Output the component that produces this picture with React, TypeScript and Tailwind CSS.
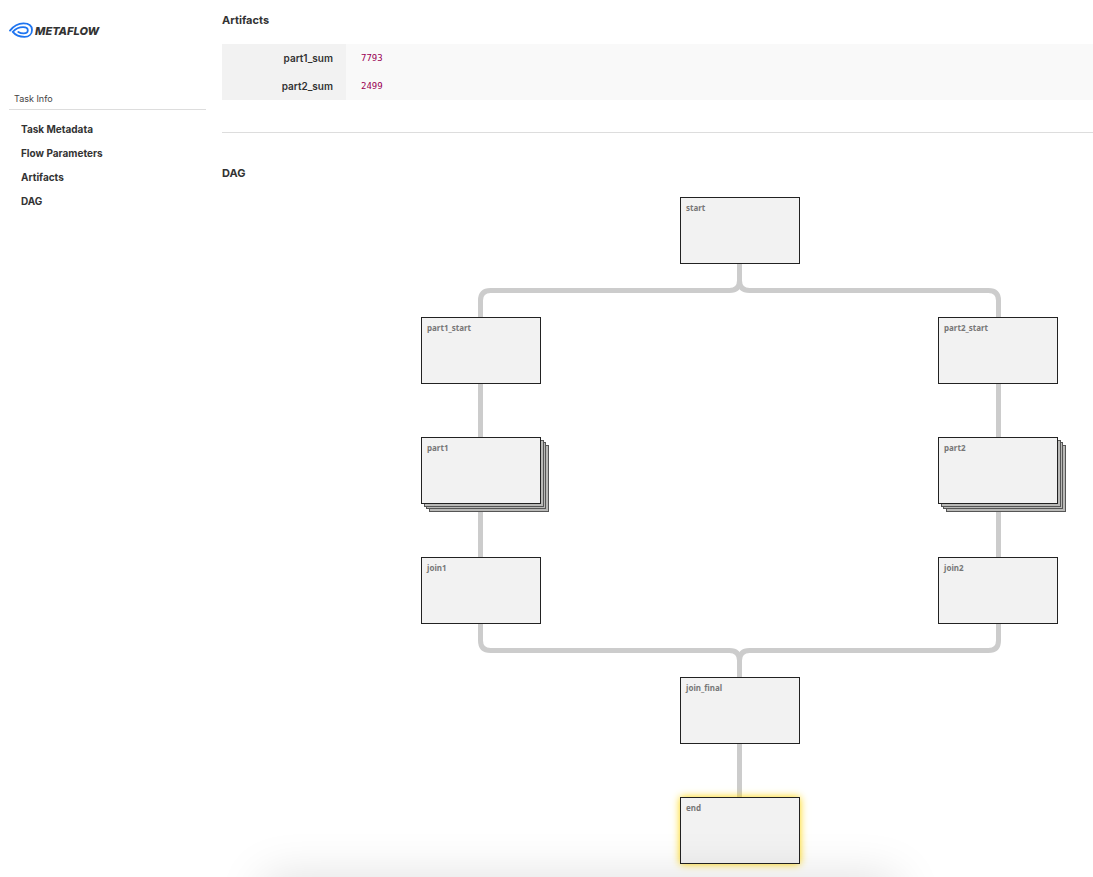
type DagNode = {
  name: string;
  spot: string;
  stacked?: boolean;
  active?: boolean;
};

const links = ["Task Metadata", "Flow Parameters", "Artifacts", "DAG"];

const artifacts = [
  { name: "part1_sum", value: "7793" },
  { name: "part2_sum", value: "2499" },
];

const nodes: DagNode[] = [
  { name: "start", spot: "left-[458px] top-0" },
  { name: "part1_start", spot: "left-[199px] top-[120px]" },
  { name: "part2_start", spot: "left-[716px] top-[120px]" },
  { name: "part1", spot: "left-[199px] top-[240px]", stacked: true },
  { name: "part2", spot: "left-[716px] top-[240px]", stacked: true },
  { name: "join1", spot: "left-[199px] top-[360px]" },
  { name: "join2", spot: "left-[716px] top-[360px]" },
  { name: "join_final", spot: "left-[458px] top-[480px]" },
  { name: "end", spot: "left-[458px] top-[600px]", active: true },
];

const connectors = [
  "M517.5 60V83.5Q517.5 93.5 507.5 93.5H268.5Q258.5 93.5 258.5 103.5V125",
  "M517.5 60V83.5Q517.5 93.5 527.5 93.5H766.5Q776.5 93.5 776.5 103.5V125",
  "M258.5 180V245",
  "M776.5 180V245",
  "M258.5 300V365",
  "M776.5 300V365",
  "M258.5 420V443.5Q258.5 453.5 268.5 453.5H507.5Q517.5 453.5 517.5 463.5V485",
  "M776.5 420V443.5Q776.5 453.5 766.5 453.5H527.5Q517.5 453.5 517.5 463.5V485",
  "M517.5 540V605",
];

function Logo() {
  return (
    <div className="flex h-4 items-center gap-0.5">
      <svg width="24" height="16" viewBox="0 0 24 16" fill="none" stroke="#1f75f0" strokeWidth="1.8" strokeLinecap="round" aria-hidden="true">
        <path d="M1 8.6C4.5 4 9.5 1.3 14.5 1.3C20 1.3 23 4 23 7.900C23 12 20 14.900 15.500 14.900C10.500 14.900 6.500 13.300 3.800 9.900C6.500 7 10 5.200 14 5.200C17.200 5.200 18.800 6.300 18.800 8.300C18.800 10.400 17.200 11.400 14.800 11.400C12.600 11.400 10.800 10.900 9.300 9.900" />
      </svg>
      <span className="pt-0.5 font-['Inter',sans-serif] text-[11px] leading-4 font-extrabold italic text-[#333]">METAFLOW</span>
    </div>
  );
}

function Node({ node }: { node: DagNode }) {
  return (
    <div className={`absolute h-[67px] w-[120px] ${node.spot}`}>
      {node.stacked && (
        <>
          <div className="absolute left-2 top-2 h-full w-full border border-[#555] bg-[#b9b9b7]" />
          <div className="absolute left-[5px] top-[5px] h-full w-full border border-[#555] bg-[#b9b9b7]" />
          <div className="absolute left-[3px] top-[3px] h-full w-full border border-[#555] bg-[#b9b9b7]" />
        </>
      )}
      <div
        className={`relative h-full border border-[#222] bg-[#f2f2f2] px-[5px] py-1 font-['Noto_Sans',sans-serif] text-[8px] leading-3 font-bold text-[#777] ${
          node.active ? "shadow-[0_0_8px_#ffd500]" : ""
        }`}
      >
        {node.name}
      </div>
    </div>
  );
}

export default function App() {
  return (
    <div className="relative flex h-screen overflow-hidden bg-white font-['Inter',sans-serif] text-[#333]">
      <aside className="ml-[9px] w-[197px] shrink-0 pt-[22px]">
        <Logo />
        <nav aria-label="Task Info" className="mt-[54px]">
          <h2 className="border-b border-[#ddd] px-[5px] pb-[3px] text-[9px] leading-[14px] text-[#444]">Task Info</h2>
          <ul className="mt-[7px] px-3 text-[10px] leading-6 font-bold">
            {links.map((link) => (
              <li key={link}>
                <a href={`#${link.toLowerCase().replace(" ", "-")}`}>{link}</a>
              </li>
            ))}
          </ul>
        </nav>
      </aside>

      <main className="ml-4 min-w-0 flex-1">
        <section id="artifacts" className="border-b border-[#ddd] pt-3 pb-8">
          <h3 className="text-[11px] leading-4 font-bold">Artifacts</h3>
          <table className="mt-4 w-full border-collapse">
            <tbody>
              {artifacts.map((artifact) => (
                <tr key={artifact.name} className="h-7 bg-[#f9f9f9]">
                  <th scope="row" className="w-[124px] bg-[#f2f2f2] pr-[13px] text-right text-[10px] leading-4 font-semibold">
                    {artifact.name}
                  </th>
                  <td className="pl-[15px] font-['DejaVu_Sans_Mono',monospace] text-[9px] leading-4 text-[#990055]">{artifact.value}</td>
                </tr>
              ))}
            </tbody>
          </table>
        </section>

        <section id="dag" className="pt-8">
          <h3 className="text-[11px] leading-4 font-bold">DAG</h3>
          <div className="relative mt-4 h-[667px]">
            <svg width="837" height="667" viewBox="0 0 837 667" fill="none" stroke="#ccc" strokeWidth="5" className="absolute left-0 top-0" aria-hidden="true">
              {connectors.map((d) => (
                <path key={d} d={d} />
              ))}
            </svg>
            {nodes.map((node) => (
              <Node key={node.name} node={node} />
            ))}
          </div>
        </section>
      </main>

      <div className="pointer-events-none absolute left-[264px] right-[196px] top-full h-20 shadow-[0_0_48px_rgba(0,0,0,0.13)]" />
    </div>
  );
}
